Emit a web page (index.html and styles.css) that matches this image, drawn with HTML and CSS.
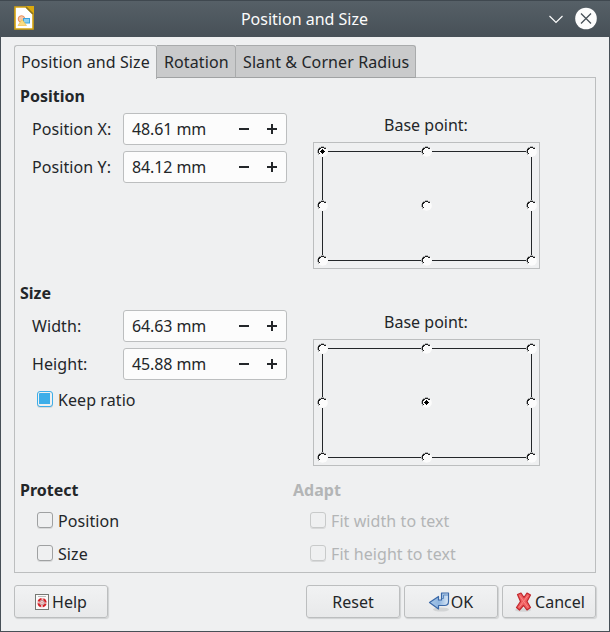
FILE: index.html
```html
<!DOCTYPE html>
<html lang="en">
<head>
<meta charset="utf-8">
<title>Position and Size</title>
<link rel="stylesheet" href="styles.css">
</head>
<body>
<svg class="defs" width="0" height="0">
  <symbol id="radio" viewBox="0 0 11 11">
    <rect width="11" height="11" fill="#eff0f1"/>
    <circle cx="5.7" cy="5.7" r="5.1" fill="#fcfcfc"/>
    <g shape-rendering="crispEdges">
      <path d="M4 0H7V1H4ZM2 1H4V2H2ZM1 2H2V3H1ZM0 4H1V7H0ZM1 7H2V9H1ZM7 1H9V2H7Z" fill="#b2b4b5"/>
      <path d="M4 1H7V2H4ZM2 2H4V3H2ZM7 2H9V3H7ZM1 3H3V4H1ZM1 4H2V7H1ZM2 7H3V8H2Z" fill="#1c1d1e"/>
    </g>
  </symbol>
  <symbol id="dot" viewBox="0 0 11 11"><path d="M5 3H6V4H7V5H8V6H7V7H6V8H5V7H4V6H3V5H4V4H5Z" fill="#000"/></symbol>
  <symbol id="grid" viewBox="0 0 227 127">
    <rect x=".5" y=".5" width="226" height="126" fill="none" stroke="#bcbebf"/>
    <rect x="9.5" y="9.5" width="209" height="109" fill="none" stroke="#232629"/>
    <use href="#radio" x="4" y="4" width="11" height="11"/><use href="#radio" x="108" y="4" width="11" height="11"/><use href="#radio" x="213" y="4" width="11" height="11"/>
    <use href="#radio" x="4" y="58" width="11" height="11"/><use href="#radio" x="108" y="58" width="11" height="11"/><use href="#radio" x="213" y="58" width="11" height="11"/>
    <use href="#radio" x="4" y="113" width="11" height="11"/><use href="#radio" x="108" y="113" width="11" height="11"/><use href="#radio" x="213" y="113" width="11" height="11"/>
  </symbol>
</svg>
<div class="window">
  <header class="titlebar">
    <svg class="app-icon" width="20" height="24" viewBox="0 0 20 24">
      <path d="M1 1H12L19 8V23H1Z" fill="#fff" stroke="#d5a410" stroke-width="1.6"/>
      <path d="M11.5 0H20V8.5Z" fill="#dba90c"/><path d="M12 1V1L19 8" stroke="#8a7322" stroke-width="1.4"/>
      <circle cx="7.500" cy="13" r="3.300" fill="#f6c6a8" stroke="#e98d55"/>
      <rect x="9.500" y="12.500" width="6" height="4.500" fill="#8bcff0" stroke="#3ba4dc"/>
      <path d="M4 19.500L8 13.500 12.500 19.500Z" fill="#fbdc83" stroke="#f0c24b" stroke-width=".7"/>
    </svg>
    <h1>Position and Size</h1>
    <svg class="controls" width="50" height="24" viewBox="0 0 50 24">
      <path d="M1.500 9L8 15.500 14.500 9" fill="none" stroke="#fcfcfc" stroke-width="1.200"/>
      <circle cx="38" cy="11.500" r="10.800" fill="#fcfcfc"/>
      <path d="M33 6.500L43 16.500M43 6.500L33 16.500" stroke="#475057" stroke-width="1.300"/>
    </svg>
  </header>
  <main>
    <nav class="tabs">
      <span class="tab active">Position and Size</span><span class="tab second">Rotation</span><span class="tab third">Slant &amp; Corner Radius</span>
    </nav>
    <div class="panel">
      <section class="group">
        <div class="left">
          <h2>Position</h2>
          <div class="field"><label>Position X:</label><div class="spin"><span>48.61 mm</span><i class="minus"></i><i class="plus"></i></div></div>
          <div class="field"><label>Position Y:</label><div class="spin"><span>84.12 mm</span><i class="minus"></i><i class="plus"></i></div></div>
        </div>
        <div class="base"><span>Base point:</span>
          <svg width="227" height="127" viewBox="0 0 227 127"><use href="#grid" width="227" height="127"/><use href="#dot" x="4" y="4" width="11" height="11"/></svg>
        </div>
      </section>
      <section class="group">
        <div class="left">
          <h2>Size</h2>
          <div class="field"><label>Width:</label><div class="spin"><span>64.63 mm</span><i class="minus"></i><i class="plus"></i></div></div>
          <div class="field"><label>Height:</label><div class="spin"><span>45.88 mm</span><i class="minus"></i><i class="plus"></i></div></div>
          <div class="check keep"><i class="box on"></i>Keep ratio</div>
        </div>
        <div class="base"><span>Base point:</span>
          <svg width="227" height="127" viewBox="0 0 227 127"><use href="#grid" width="227" height="127"/><use href="#dot" x="108" y="58" width="11" height="11"/></svg>
        </div>
      </section>
      <section class="group last">
        <div class="left">
          <h2>Protect</h2>
          <div class="check"><i class="box"></i>Position</div>
          <div class="check"><i class="box"></i>Size</div>
        </div>
        <div class="adapt">
          <h2>Adapt</h2>
          <div class="check"><i class="box"></i>Fit width to text</div>
          <div class="check"><i class="box"></i>Fit height to text</div>
        </div>
      </section>
    </div>
    <footer class="actions">
      <div class="button help">
        <svg width="14" height="16" viewBox="0 0 14 16"><rect x=".5" y=".5" width="13" height="15" fill="#fafafa" stroke="#757873"/><path d="M3 2.500H11" stroke="#bbb"/><circle cx="7" cy="8.700" r="3.700" fill="none" stroke="#f0b9b9" stroke-width="2"/><circle cx="7" cy="8.700" r="3.700" fill="none" stroke="#d51f26" stroke-width="2" stroke-dasharray="3.700 2.112" stroke-dashoffset="-1.056"/><circle cx="7" cy="8.700" r="2.200" fill="#fff" stroke="#a66" stroke-width=".8"/><path d="M5.500 8.700H8.500M7 7.200V10.200" stroke="#e6a5a5"/></svg>
        <span>Help</span>
      </div>
      <div class="button reset"><span>Reset</span></div>
      <div class="button ok">
        <svg width="22" height="20" viewBox="0 0 22 20"><defs><linearGradient id="arrow" x2="1"><stop stop-color="#a9c9ea"/><stop offset=".5" stop-color="#8fb5df"/><stop offset="1" stop-color="#dce9f6"/></linearGradient></defs><ellipse cx="13" cy="17.500" rx="8" ry="2" fill="#d2d4d5"/><path d="M13.500 1H20.500V9.500Q20.500 13.500 16.500 13.500H10.500V17L1.500 10.500 10.500 4.500V8H13.500Z" fill="url(#arrow)" stroke="#3b69a8" stroke-width="1.200" stroke-linejoin="round"/><path d="M14 6.500H15.500V3H20" fill="none" stroke="#5b88bf"/></svg>
        <span>OK</span>
      </div>
      <div class="button cancel">
        <svg width="17" height="20" viewBox="0 0 17 20"><ellipse cx="8" cy="18" rx="8" ry="1.700" fill="#d2d4d5"/><path d="M2.500 2.500L6 1 9 5.500 12 1 15.500 3 12 9.500 15.500 15.500 12 18 8.500 13.500 4.500 18 1.500 15.500 5.500 9.500Z" fill="#f05e60" stroke="#c1272d" stroke-width="1.200" stroke-linejoin="round"/><path d="M4.500 3.500L13 15.500M13 3.500L4 15.500" stroke="#fb8583"/></svg>
        <span>Cancel</span>
      </div>
    </footer>
  </main>
</div>
</body>
</html>
```
FILE: styles.css
```css
* { box-sizing: border-box; }
body { margin: 0; font: 16px/22px "Noto Sans", sans-serif; color: #232629; }
.defs { position: absolute; }
.window { width: 610px; height: 632px; background: #eff0f1; border: 1px solid #475057; border-top: 0; }
.titlebar { height: 37px; margin: 0 -1px; padding: 0 12px 0 14px; display: flex; align-items: center; justify-content: space-between; background: linear-gradient(#566067, #475057); border-top: 1px solid #3f484f; color: #fcfcfc; }
.titlebar h1 { margin: 0 0 0 27px; font-size: 16px; font-weight: 400; }
.app-icon { margin-top: -2px; }
main { padding: 8px 13px 0; }
.tabs { display: flex; height: 33px; position: relative; margin-bottom: -1px; letter-spacing: .1px; }
.tab { border: 1px solid #a9abac; border-bottom-color: #a0a2a3; border-left: 0; background: #c9cacb; padding: 5px 0 0 7px; width: 79px; white-space: nowrap; border-radius: 0 3px 0 0; }
.tab.active { width: 143px; padding-left: 6px; border: 1px solid #bcbebf; border-right-color: #a9abac; border-bottom: 0; background: #eff0f1; border-radius: 3px 3px 0 0; height: 34px; }
.tab.third { width: 180px; }
.panel { height: 496px; width: 582px; border: 1px solid #bcbebf; padding: 7px 0 0 5px; }
.group { display: flex; height: 197px; }
.group.last { height: 88px; }
.left { width: 273px; }
h2 { margin: 0; font-size: 16px; line-height: 22px; font-weight: 700; }
.field { display: flex; align-items: center; height: 32px; margin: 6px 0 0 12px; }
.field label { width: 91px; letter-spacing: .08px; }
.spin { width: 164px; height: 32px; border: 1px solid #bcbebf; border-radius: 3px; background: #fcfcfc; display: flex; align-items: center; padding-left: 8px; }
.spin span { width: 107px; letter-spacing: -.1px; }
.minus, .plus { width: 10px; height: 10px; background: linear-gradient(#232629, #232629) center / 10px 2px no-repeat; }
.plus { margin-left: 18px; background: linear-gradient(#232629, #232629) center / 10px 2px no-repeat, linear-gradient(#232629, #232629) center / 2px 10px no-repeat; }
.base { width: 227px; margin: 29px 0 0 20px; display: flex; flex-direction: column; align-items: center; gap: 6px; }
.base span { margin-right: 1px; }
.check { display: flex; align-items: center; height: 22px; gap: 5px; margin: 11px 0 0 17px; letter-spacing: .08px; }
h2 + .check { margin-top: 9px; }
.box { width: 16px; height: 16px; border: 1px solid #9fa1a2; border-radius: 3px; box-shadow: 0 1px 0 #d8d9da; margin-top: -2px; }
.box.on { border-color: #3daee9; background: #3daee9 content-box; padding: 1px 2px 2px 1px; }
.check.keep { margin-top: 9px; }
.adapt { color: #b3b5b6; }
.adapt .box { border-color: #c8caca; }
.actions { display: flex; margin-top: 12px; width: 582px; }
.button { width: 94px; height: 33px; border: 1px solid #bcbebf; border-radius: 3px; background: linear-gradient(#f1f2f3, #e8e9ea); box-shadow: 1px 1px 1px #d0d2d3; display: flex; align-items: center; justify-content: center; gap: 3px; margin-left: 4px; white-space: nowrap; }
.help { margin-left: 0; }
.reset { margin-left: auto; }
.ok { gap: 1px; padding-right: 1px; }
.cancel { padding-left: 2px; }
```
